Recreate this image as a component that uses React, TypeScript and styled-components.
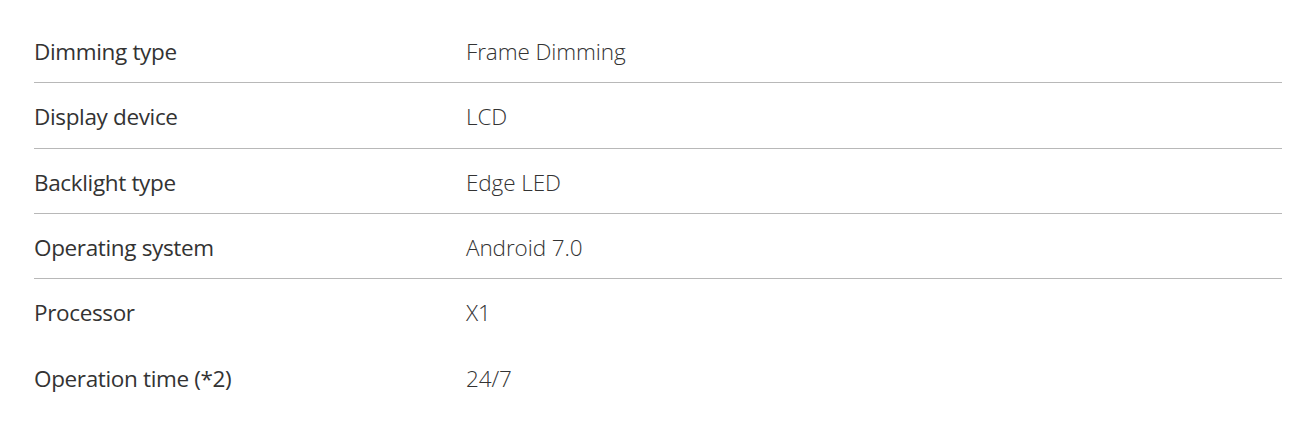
import React from "react";
import styled, { createGlobalStyle } from "styled-components";

const Global = createGlobalStyle`
  html, body { margin: 0; padding: 0; background: #fff; }
  body { font-family: "Open Sans", "Noto Sans", sans-serif; }
`;

const Page = styled.div`
  padding: 18px 30px 0 34px;
`;

const Table = styled.div`
  width: 1248px;
  display: flex;
  flex-direction: column;
`;

const Row = styled.div<{ $border: boolean }>`
  display: grid;
  grid-template-columns: 432px 1fr;
  align-items: center;
  height: 65.33px;
  padding-top: 4px;
  box-sizing: border-box;
  border-bottom: 1px solid ${(p) => (p.$border ? "#b8b8b8" : "transparent")};
  color: #333;
  line-height: 1;
`;

const Label = styled.div`
  font-size: 22.5px;
  font-weight: 500;
  letter-spacing: -0.35px;
`;

const Value = styled.div`
  font-size: 22.5px;
  font-weight: 300;
  letter-spacing: -0.1px;
`;

const rows: [string, string, boolean][] = [
  ["Dimming type", "Frame Dimming", true],
  ["Display device", "LCD", true],
  ["Backlight type", "Edge LED", true],
  ["Operating system", "Android 7.0", true],
  ["Processor", "X1", false],
  ["Operation time (*2)", "24/7", false],
];

export default function App() {
  return (
    <>
      <Global />
      <Page>
        <Table>
          {rows.map(([l, v, b]) => (
            <Row key={l} $border={b}>
              <Label>{l}</Label>
              <Value>{v}</Value>
            </Row>
          ))}
        </Table>
      </Page>
    </>
  );
}
